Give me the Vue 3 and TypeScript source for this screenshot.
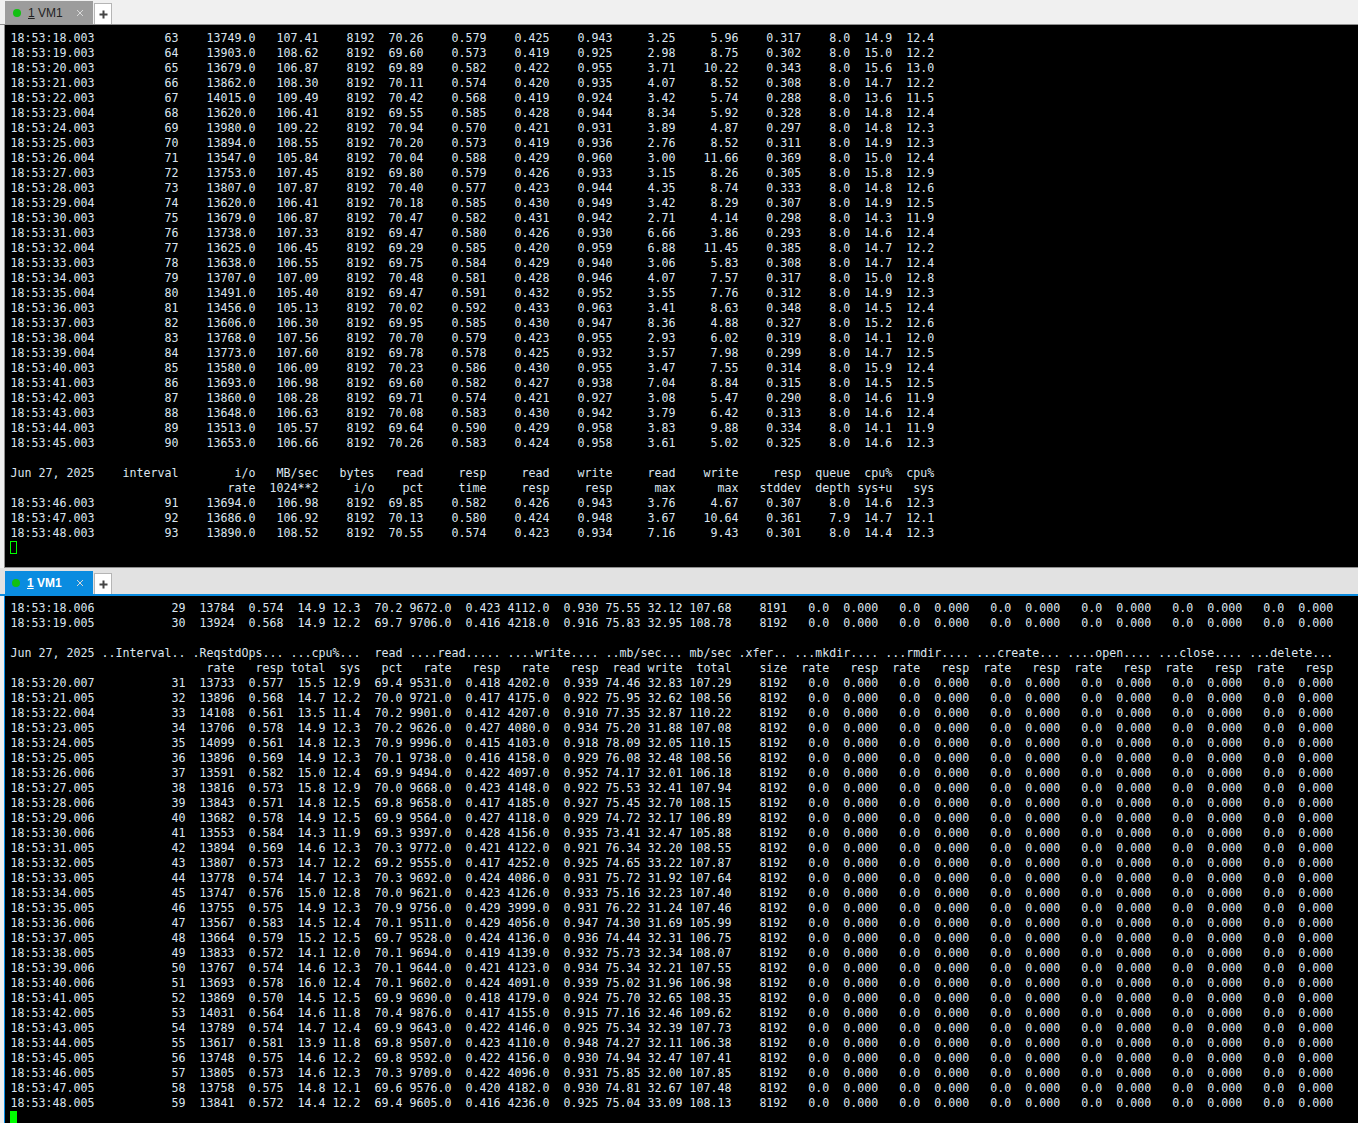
<script setup lang="ts">
const pad = (cells: string[], ends: number[]): string => {
  let line = ''
  cells.forEach((c, i) => {
    line = line.padEnd(ends[i] - c.length, ' ') + c
  })
  return line
}

const topEnds = [12, 24, 35, 44, 52, 59, 68, 77, 86, 95, 104, 113, 120, 126, 132]
const topRows = `18:53:18.003 63 13749.0 107.41 8192 70.26 0.579 0.425 0.943 3.25 5.96 0.317 8.0 14.9 12.4
18:53:19.003 64 13903.0 108.62 8192 69.60 0.573 0.419 0.925 2.98 8.75 0.302 8.0 15.0 12.2
18:53:20.003 65 13679.0 106.87 8192 69.89 0.582 0.422 0.955 3.71 10.22 0.343 8.0 15.6 13.0
18:53:21.003 66 13862.0 108.30 8192 70.11 0.574 0.420 0.935 4.07 8.52 0.308 8.0 14.7 12.2
18:53:22.003 67 14015.0 109.49 8192 70.42 0.568 0.419 0.924 3.42 5.74 0.288 8.0 13.6 11.5
18:53:23.004 68 13620.0 106.41 8192 69.55 0.585 0.428 0.944 8.34 5.92 0.328 8.0 14.8 12.4
18:53:24.003 69 13980.0 109.22 8192 70.94 0.570 0.421 0.931 3.89 4.87 0.297 8.0 14.8 12.3
18:53:25.003 70 13894.0 108.55 8192 70.20 0.573 0.419 0.936 2.76 8.52 0.311 8.0 14.9 12.3
18:53:26.004 71 13547.0 105.84 8192 70.04 0.588 0.429 0.960 3.00 11.66 0.369 8.0 15.0 12.4
18:53:27.003 72 13753.0 107.45 8192 69.80 0.579 0.426 0.933 3.15 8.26 0.305 8.0 15.8 12.9
18:53:28.003 73 13807.0 107.87 8192 70.40 0.577 0.423 0.944 4.35 8.74 0.333 8.0 14.8 12.6
18:53:29.004 74 13620.0 106.41 8192 70.18 0.585 0.430 0.949 3.42 8.29 0.307 8.0 14.9 12.5
18:53:30.003 75 13679.0 106.87 8192 70.47 0.582 0.431 0.942 2.71 4.14 0.298 8.0 14.3 11.9
18:53:31.003 76 13738.0 107.33 8192 69.47 0.580 0.426 0.930 6.66 3.86 0.293 8.0 14.6 12.4
18:53:32.004 77 13625.0 106.45 8192 69.29 0.585 0.420 0.959 6.88 11.45 0.385 8.0 14.7 12.2
18:53:33.003 78 13638.0 106.55 8192 69.75 0.584 0.429 0.940 3.06 5.83 0.308 8.0 14.7 12.4
18:53:34.003 79 13707.0 107.09 8192 70.48 0.581 0.428 0.946 4.07 7.57 0.317 8.0 15.0 12.8
18:53:35.004 80 13491.0 105.40 8192 69.47 0.591 0.432 0.952 3.55 7.76 0.312 8.0 14.9 12.3
18:53:36.003 81 13456.0 105.13 8192 70.02 0.592 0.433 0.963 3.41 8.63 0.348 8.0 14.5 12.4
18:53:37.003 82 13606.0 106.30 8192 69.95 0.585 0.430 0.947 8.36 4.88 0.327 8.0 15.2 12.6
18:53:38.004 83 13768.0 107.56 8192 70.70 0.579 0.423 0.955 2.93 6.02 0.319 8.0 14.1 12.0
18:53:39.004 84 13773.0 107.60 8192 69.78 0.578 0.425 0.932 3.57 7.98 0.299 8.0 14.7 12.5
18:53:40.003 85 13580.0 106.09 8192 70.23 0.586 0.430 0.955 3.47 7.55 0.314 8.0 15.9 12.4
18:53:41.003 86 13693.0 106.98 8192 69.60 0.582 0.427 0.938 7.04 8.84 0.315 8.0 14.5 12.5
18:53:42.003 87 13860.0 108.28 8192 69.71 0.574 0.421 0.927 3.08 5.47 0.290 8.0 14.6 11.9
18:53:43.003 88 13648.0 106.63 8192 70.08 0.583 0.430 0.942 3.79 6.42 0.313 8.0 14.6 12.4
18:53:44.003 89 13513.0 105.57 8192 69.64 0.590 0.429 0.958 3.83 9.88 0.334 8.0 14.1 11.9
18:53:45.003 90 13653.0 106.66 8192 70.26 0.583 0.424 0.958 3.61 5.02 0.325 8.0 14.6 12.3`
const topTail = `18:53:46.003 91 13694.0 106.98 8192 69.85 0.582 0.426 0.943 3.76 4.67 0.307 8.0 14.6 12.3
18:53:47.003 92 13686.0 106.92 8192 70.13 0.580 0.424 0.948 3.67 10.64 0.361 7.9 14.7 12.1
18:53:48.003 93 13890.0 108.52 8192 70.55 0.574 0.423 0.934 7.16 9.43 0.301 8.0 14.4 12.3`

const fmtTop = (block: string) => block.split('\n').map((l) => pad(l.split(' '), topEnds))

const topText = [
  ...fmtTop(topRows),
  '',
  pad(['Jun 27, 2025', 'interval', 'i/o', 'MB/sec', 'bytes', 'read', 'resp', 'read', 'write', 'read', 'write', 'resp', 'queue', 'cpu%', 'cpu%'], topEnds),
  pad(['', '', 'rate', '1024**2', 'i/o', 'pct', 'time', 'resp', 'resp', 'max', 'max', 'stddev', 'depth', 'sys+u', 'sys'], topEnds),
  ...fmtTop(topTail),
].join('\n')

const botEnds = [12, 25, 32, 39, 45, 50, 56, 63, 70, 77, 84, 90, 96, 103, 111]
const opEnds = [117, 124, 130, 137, 143, 150, 156, 163, 169, 176, 182, 189]
const allEnds = [...botEnds, ...opEnds]
const zeros = Array.from({ length: 6 }, () => ['0.0', '0.000']).flat()

const fmtBot = (block: string) =>
  block.split('\n').map((l) => pad([...l.split(' '), ...zeros], allEnds))

const botHead = `18:53:18.006 29 13784 0.574 14.9 12.3 70.2 9672.0 0.423 4112.0 0.930 75.55 32.12 107.68 8191
18:53:19.005 30 13924 0.568 14.9 12.2 69.7 9706.0 0.416 4218.0 0.916 75.83 32.95 108.78 8192`
const botRows = `18:53:20.007 31 13733 0.577 15.5 12.9 69.4 9531.0 0.418 4202.0 0.939 74.46 32.83 107.29 8192
18:53:21.005 32 13896 0.568 14.7 12.2 70.0 9721.0 0.417 4175.0 0.922 75.95 32.62 108.56 8192
18:53:22.004 33 14108 0.561 13.5 11.4 70.2 9901.0 0.412 4207.0 0.910 77.35 32.87 110.22 8192
18:53:23.005 34 13706 0.578 14.9 12.3 70.2 9626.0 0.427 4080.0 0.934 75.20 31.88 107.08 8192
18:53:24.005 35 14099 0.561 14.8 12.3 70.9 9996.0 0.415 4103.0 0.918 78.09 32.05 110.15 8192
18:53:25.005 36 13896 0.569 14.9 12.3 70.1 9738.0 0.416 4158.0 0.929 76.08 32.48 108.56 8192
18:53:26.006 37 13591 0.582 15.0 12.4 69.9 9494.0 0.422 4097.0 0.952 74.17 32.01 106.18 8192
18:53:27.005 38 13816 0.573 15.8 12.9 70.0 9668.0 0.423 4148.0 0.922 75.53 32.41 107.94 8192
18:53:28.006 39 13843 0.571 14.8 12.5 69.8 9658.0 0.417 4185.0 0.927 75.45 32.70 108.15 8192
18:53:29.006 40 13682 0.578 14.9 12.5 69.9 9564.0 0.427 4118.0 0.929 74.72 32.17 106.89 8192
18:53:30.006 41 13553 0.584 14.3 11.9 69.3 9397.0 0.428 4156.0 0.935 73.41 32.47 105.88 8192
18:53:31.005 42 13894 0.569 14.6 12.3 70.3 9772.0 0.421 4122.0 0.921 76.34 32.20 108.55 8192
18:53:32.005 43 13807 0.573 14.7 12.2 69.2 9555.0 0.417 4252.0 0.925 74.65 33.22 107.87 8192
18:53:33.005 44 13778 0.574 14.7 12.3 70.3 9692.0 0.424 4086.0 0.931 75.72 31.92 107.64 8192
18:53:34.005 45 13747 0.576 15.0 12.8 70.0 9621.0 0.423 4126.0 0.933 75.16 32.23 107.40 8192
18:53:35.005 46 13755 0.575 14.9 12.3 70.9 9756.0 0.429 3999.0 0.931 76.22 31.24 107.46 8192
18:53:36.006 47 13567 0.583 14.5 12.4 70.1 9511.0 0.429 4056.0 0.947 74.30 31.69 105.99 8192
18:53:37.005 48 13664 0.579 15.2 12.5 69.7 9528.0 0.424 4136.0 0.936 74.44 32.31 106.75 8192
18:53:38.005 49 13833 0.572 14.1 12.0 70.1 9694.0 0.419 4139.0 0.932 75.73 32.34 108.07 8192
18:53:39.006 50 13767 0.574 14.6 12.3 70.1 9644.0 0.421 4123.0 0.934 75.34 32.21 107.55 8192
18:53:40.006 51 13693 0.578 16.0 12.4 70.1 9602.0 0.424 4091.0 0.939 75.02 31.96 106.98 8192
18:53:41.005 52 13869 0.570 14.5 12.5 69.9 9690.0 0.418 4179.0 0.924 75.70 32.65 108.35 8192
18:53:42.005 53 14031 0.564 14.6 11.8 70.4 9876.0 0.417 4155.0 0.915 77.16 32.46 109.62 8192
18:53:43.005 54 13789 0.574 14.7 12.4 69.9 9643.0 0.422 4146.0 0.925 75.34 32.39 107.73 8192
18:53:44.005 55 13617 0.581 13.9 11.8 69.8 9507.0 0.423 4110.0 0.948 74.27 32.11 106.38 8192
18:53:45.005 56 13748 0.575 14.6 12.2 69.8 9592.0 0.422 4156.0 0.930 74.94 32.47 107.41 8192
18:53:46.005 57 13805 0.573 14.6 12.3 70.3 9709.0 0.422 4096.0 0.931 75.85 32.00 107.85 8192
18:53:47.005 58 13758 0.575 14.8 12.1 69.6 9576.0 0.420 4182.0 0.930 74.81 32.67 107.48 8192
18:53:48.005 59 13841 0.572 14.4 12.2 69.4 9605.0 0.416 4236.0 0.925 75.04 33.09 108.13 8192`

const headA = 'Jun 27, 2025 ..Interval.. .ReqstdOps... ...cpu%...  read ....read..... ....write.... ..mb/sec... mb/sec .xfer.. ...mkdir.... ...rmdir.... ...create... ....open.... ...close.... ...delete...'
const headB = pad(
  ['', '', 'rate', 'resp', 'total', 'sys', 'pct', 'rate', 'resp', 'rate', 'resp', 'read', 'write', 'total', 'size',
    'rate', 'resp', 'rate', 'resp', 'rate', 'resp', 'rate', 'resp', 'rate', 'resp', 'rate', 'resp'],
  allEnds,
)

const botText = [...fmtBot(botHead), '', headA, headB, ...fmtBot(botRows)].join('\n')

const panes = [
  { key: 'a', active: false, text: topText },
  { key: 'b', active: true, text: botText },
]
</script>

<template>
  <div class="app">
    <section v-for="p in panes" :key="p.key" class="pane" :class="{ active: p.active, idle: !p.active }">
      <header class="tabbar">
        <div class="tab">
          <span class="dot"></span>
          <span class="label"><u>1</u> VM1</span>
          <svg class="close" width="8" height="8" viewBox="0 0 8 8">
            <path d="M1 1L7 7M7 1L1 7" fill="none" stroke="currentColor" stroke-width="1" />
          </svg>
        </div>
        <div class="plus">
          <svg width="9" height="9" viewBox="0 0 9 9">
            <path d="M4.5 0.5V8.5M0.5 4.5H8.5" fill="none" stroke="#444" stroke-width="2" />
          </svg>
        </div>
      </header>
      <div class="term">
        <pre class="screen">{{ p.text }}</pre>
        <span class="cursor"></span>
      </div>
    </section>
  </div>
</template>

<style>
html, body { margin: 0; background: #000; overflow: hidden; }
</style>

<style scoped>
.app {
  width: 1358px;
  height: 1123px;
  display: flex;
  flex-direction: column;
  background: #f0f0f0;
  overflow: hidden;
}
.pane { display: flex; flex-direction: column; }
.pane.idle { height: 568px; }
.pane.active { flex: 1; min-height: 0; }
.tabbar {
  display: flex;
  align-items: flex-end;
  gap: 1px;
  box-sizing: border-box;
  height: 25px;
  padding-left: 5px;
  background: #f0f0f0;
  border-bottom: 1px solid #8e8e8e;
}
.active .tabbar {
  height: 28px;
  background: #e2e2e2;
  border-bottom: 2px solid #0a8ce0;
}
.tab {
  display: flex;
  align-items: center;
  box-sizing: border-box;
  width: 88px;
  height: 23px;
  padding-left: 8px;
  background: #9c9c9c;
  color: #222;
  font: 12px "Liberation Sans", Arial, sans-serif;
}
.active .tab {
  padding-left: 7px;
  background: #0a8ce0;
  color: #fff;
  font-weight: 700;
}
.dot {
  width: 8px;
  height: 8px;
  border-radius: 50%;
  background: #12c012;
  margin-right: 7px;
}
.close { margin-left: auto; margin-right: 9px; color: #d8d8d8; }
.plus {
  display: flex;
  align-items: center;
  justify-content: center;
  box-sizing: border-box;
  width: 18px;
  height: 21px;
  background: #fff;
  border: 1px solid #b5b5b5;
  border-bottom: 0;
}
.term {
  position: relative;
  flex: 1;
  min-height: 0;
  background: #000;
  margin-left: 4px;
  overflow: hidden;
}
.idle .term { border-left: 1px solid #8e8e8e; border-bottom: 1px solid #8e8e8e; }
.active .term { border-left: 1px solid #0a8ce0; }
.screen {
  margin: 0;
  padding: 5px 0 0 5.5px;
  color: #dce6f0;
  font-family: "DejaVu Sans Mono", monospace;
  font-size: 11.63px;
  line-height: 15px;
  white-space: pre;
}
.idle .screen { padding-top: 6px; }
.cursor {
  position: absolute;
  left: 5px;
  width: 7px;
  height: 13px;
  box-sizing: border-box;
}
.idle .cursor { top: 516px; border: 1px solid #00ff00; }
.active .cursor { top: 515px; background: #00ff00; }
</style>
